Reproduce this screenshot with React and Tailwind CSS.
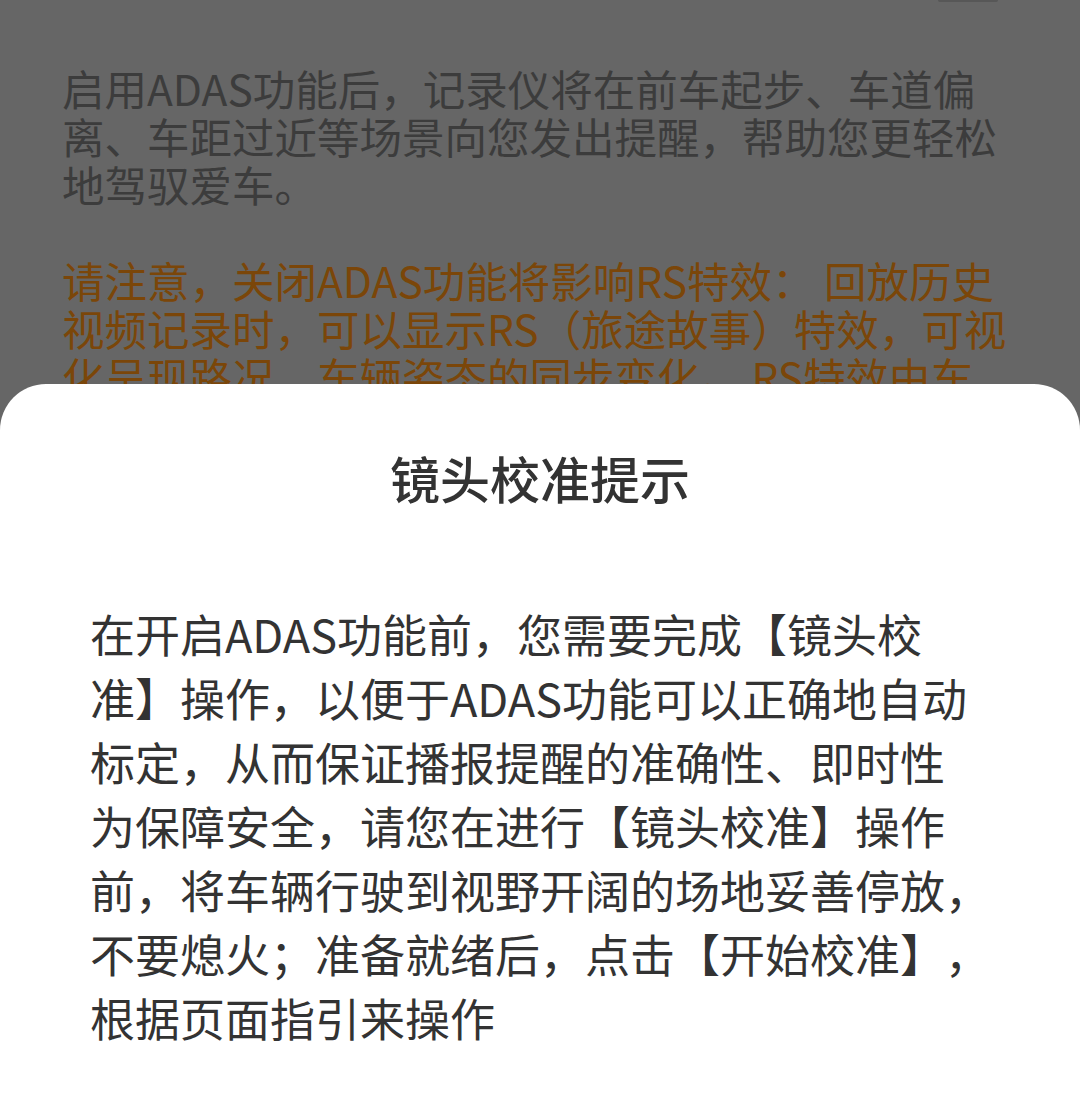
export default function App() {
  return (
    <div
      className="relative h-[1095px] w-[1080px] overflow-hidden bg-[#666666] [text-spacing-trim:space-all]"
      style={{ fontFamily: '"Noto Sans CJK SC", "Noto Sans", sans-serif' }}
    >
      {/* page behind the dimmed overlay */}
      <div className="flex justify-end">
        <div className="mr-[82px] h-[2px] w-[60px] rounded-b bg-[#575757]" />
      </div>
      <div className="px-[62px] pt-[62px] text-[42.5px] leading-[48px] text-[#3c3c3c]">
        <p className="whitespace-nowrap">
          启用ADAS功能后，记录仪将在前车起步、车道偏
          <br />
          离、车距过近等场景向您发出提醒，帮助您更轻松
          <br />
          地驾驭爱车。
        </p>
        <p className="mt-[48px] whitespace-nowrap text-[#7b4609]">
          请注意，关闭ADAS功能将影响RS特效： 回放历史
          <br />
          视频记录时，可以显示RS（旅途故事）特效，可视
          <br />
          化呈现路况、车辆姿态的同步变化。 RS特效由车
        </p>
      </div>

      {/* bottom sheet */}
      <div className="absolute inset-x-0 top-[384px] bottom-0 rounded-t-[46px] bg-white pt-[58px]">
        <h2 className="text-center text-[50px] font-medium leading-[70px] text-[#333333]">
          镜头校准提示
        </h2>
        <p className="mt-[90px] whitespace-nowrap pl-[90px] text-[45px] leading-[64px] text-[#333333]">
          在开启ADAS功能前，您需要完成【镜头校
          <br />
          准】操作，以便于ADAS功能可以正确地自动
          <br />
          标定，从而保证播报提醒的准确性、即时性
          <br />
          为保障安全，请您在进行【镜头校准】操作
          <br />
          前，将车辆行驶到视野开阔的场地妥善停放，
          <br />
          不要熄火；准备就绪后，点击【开始校准】，
          <br />
          根据页面指引来操作
        </p>
      </div>
    </div>
  );
}
